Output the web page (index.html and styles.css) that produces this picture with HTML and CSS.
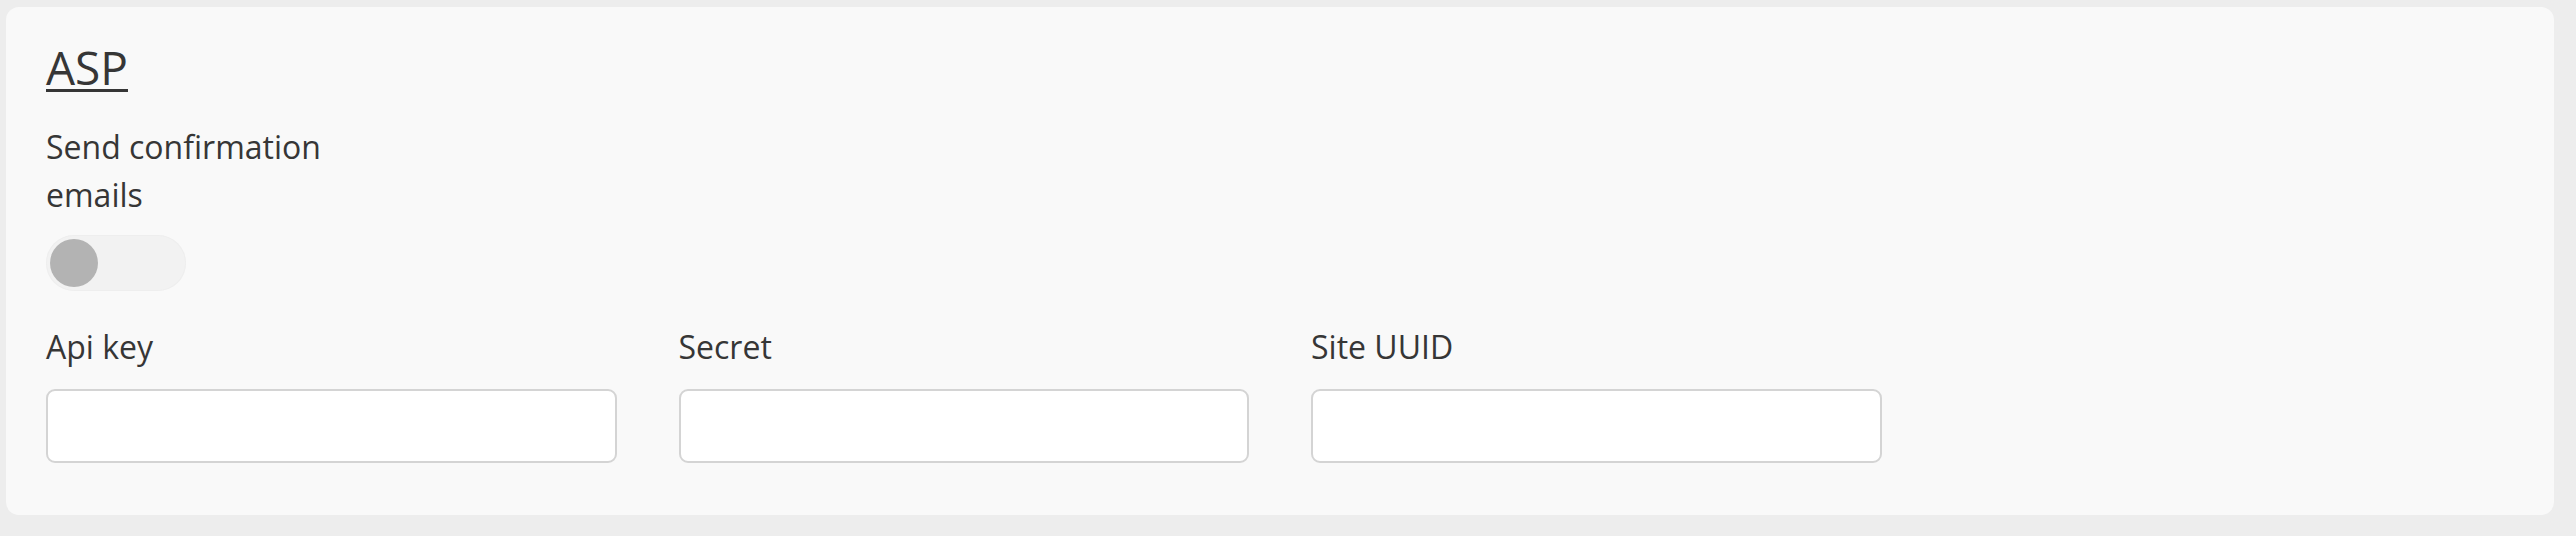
FILE: index.html
```html
<!DOCTYPE html>
<html lang="en">
<head>
<meta charset="utf-8">
<title>ASP</title>
<link rel="stylesheet" href="styles.css">
</head>
<body>
<section class="card">
  <h2 class="card-title">ASP</h2>
  <div class="toggle-field">
    <label class="field-label wrap-label" for="send-confirm">Send confirmation emails</label>
    <label class="switch">
      <input type="checkbox" id="send-confirm" class="switch-input">
      <span class="switch-track"><span class="switch-knob"></span></span>
    </label>
  </div>
  <div class="fields-grid">
    <div class="field">
      <label class="field-label" for="api-key">Api key</label>
      <input class="text-input" id="api-key" type="text">
    </div>
    <div class="field">
      <label class="field-label" for="secret">Secret</label>
      <input class="text-input" id="secret" type="text">
    </div>
    <div class="field">
      <label class="field-label" for="site-uuid">Site UUID</label>
      <input class="text-input" id="site-uuid" type="text">
    </div>
  </div>
</section>
<section class="card card-next"></section>
</body>
</html>
```
FILE: styles.css
```css
html, body {
  margin: 0;
  padding: 0;
}
body {
  background: #ededed;
  font-family: "Open Sans", "Noto Sans", sans-serif;
  color: #363636;
  padding: 7px 22px 0 6px;
  overflow: hidden;
  height: 536px;
  box-sizing: border-box;
}
.card {
  background: #f9f9f9;
  border-radius: 13px;
  padding: 32px 40px 52px 40px;
}
.card-next {
  margin-top: 21px;
  height: 1px;
  padding: 0;
  background: #fafafa;
}
.card-title {
  margin: 0;
  font-size: 46px;
  font-weight: 400;
  line-height: 56px;
  text-decoration: underline;
  text-decoration-thickness: 3px;
  text-underline-offset: 4px;
}
.toggle-field {
  margin-top: 28px;
  display: flex;
  flex-direction: column;
  align-items: flex-start;
  gap: 16px;
}
.field-label {
  display: block;
  font-size: 32px;
  line-height: 48px;
}
.wrap-label {
  width: 300px;
}
.switch {
  display: block;
  cursor: pointer;
}
.switch-input {
  display: none;
}
.switch-track {
  display: flex;
  align-items: center;
  box-sizing: border-box;
  width: 140px;
  height: 56px;
  padding: 0 4px;
  border-radius: 28px;
  background: #f2f2f2;
  box-shadow: inset 0 0 0 1px #eeeeee;
}
.switch-knob {
  width: 48px;
  height: 48px;
  border-radius: 50%;
  background: #b3b3b3;
}
.fields-grid {
  margin-top: 32px;
  display: grid;
  grid-template-columns: repeat(4, 1fr);
  column-gap: 62px;
}
.field {
  display: flex;
  flex-direction: column;
  gap: 18px;
}
.text-input {
  box-sizing: border-box;
  width: 100%;
  height: 74px;
  border: 2px solid #d4d4d4;
  border-radius: 9px;
  background: #ffffff;
  font: inherit;
  font-size: 30px;
  padding: 0 16px;
  outline: none;
}
```
